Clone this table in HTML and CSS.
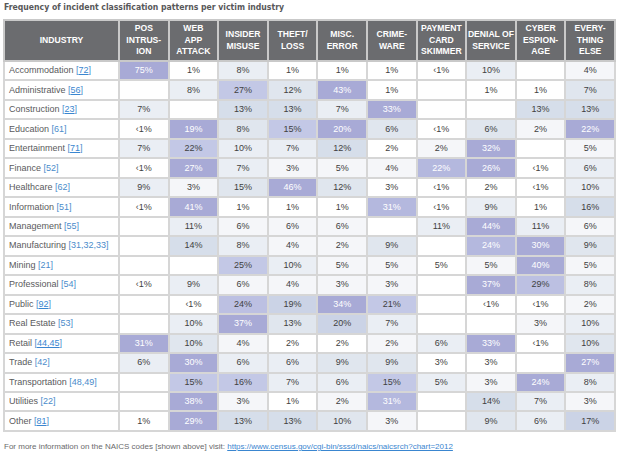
FILE: index.html
```html
<!DOCTYPE html>
<html lang="en">
<head>
<meta charset="utf-8">
<title>Frequency of incident classification patterns per victim industry</title>
<link rel="stylesheet" href="styles.css">
</head>
<body>
<div class="page">
  <h1 class="title">Frequency of incident classification patterns per victim industry</h1>
  <table class="heat">
    <colgroup>
      <col class="c-ind">
      <col class="c-val"><col class="c-val"><col class="c-val"><col class="c-val"><col class="c-val">
      <col class="c-val"><col class="c-val"><col class="c-val"><col class="c-val"><col class="c-val">
    </colgroup>
    <thead>
      <tr>
        <th>INDUSTRY</th>
        <th>POS<br>INTRUS-<br>ION</th>
        <th>WEB<br>APP<br>ATTACK</th>
        <th>INSIDER<br>MISUSE</th>
        <th>THEFT/<br>LOSS</th>
        <th>MISC.<br>ERROR</th>
        <th>CRIME-<br>WARE</th>
        <th>PAYMENT<br>CARD<br>SKIMMER</th>
        <th>DENIAL OF<br>SERVICE</th>
        <th>CYBER<br>ESPION-<br>AGE</th>
        <th>EVERY-<br>THING<br>ELSE</th>
      </tr>
    </thead>
    <tbody>
      <tr><td class="ind">Accommodation <span class="code">[<a href="#">72</a>]</span></td>
        <td class="h7">75%</td><td class="h0">1%</td><td class="h2">8%</td><td class="h0">1%</td><td class="h0">1%</td><td class="h0">1%</td><td class="h0">&lsaquo;1%</td><td class="h2">10%</td><td class="h0"></td><td class="h1">4%</td></tr>
      <tr><td class="ind">Administrative <span class="code">[<a href="#">56</a>]</span></td>
        <td class="h0"></td><td class="h2">8%</td><td class="h5">27%</td><td class="h3">12%</td><td class="h7">43%</td><td class="h0">1%</td><td class="h0"></td><td class="h0">1%</td><td class="h0">1%</td><td class="h3">7%</td></tr>
      <tr><td class="ind">Construction <span class="code">[<a href="#">23</a>]</span></td>
        <td class="h2">7%</td><td class="h0"></td><td class="h4">13%</td><td class="h4">13%</td><td class="h2">7%</td><td class="h7">33%</td><td class="h0"></td><td class="h0"></td><td class="h4">13%</td><td class="h4">13%</td></tr>
      <tr><td class="ind">Education <span class="code">[61]</span></td>
        <td class="h0">&lsaquo;1%</td><td class="h7">19%</td><td class="h3">8%</td><td class="h5">15%</td><td class="h7">20%</td><td class="h3">6%</td><td class="h0">&lsaquo;1%</td><td class="h3">6%</td><td class="h1">2%</td><td class="h7">22%</td></tr>
      <tr><td class="ind">Entertainment <span class="code">[<a href="#">71</a>]</span></td>
        <td class="h2">7%</td><td class="h5">22%</td><td class="h2">10%</td><td class="h2">7%</td><td class="h4">12%</td><td class="h0">2%</td><td class="h1">2%</td><td class="h7">32%</td><td class="h0"></td><td class="h1">5%</td></tr>
      <tr><td class="ind">Finance <span class="code">[52]</span></td>
        <td class="h0">&lsaquo;1%</td><td class="h7">27%</td><td class="h2">7%</td><td class="h1">3%</td><td class="h1">5%</td><td class="h1">4%</td><td class="h6">22%</td><td class="h7">26%</td><td class="h0">&lsaquo;1%</td><td class="h2">6%</td></tr>
      <tr><td class="ind">Healthcare <span class="code">[62]</span></td>
        <td class="h2">9%</td><td class="h1">3%</td><td class="h3">15%</td><td class="h7">46%</td><td class="h3">12%</td><td class="h0">3%</td><td class="h0">&lsaquo;1%</td><td class="h0">2%</td><td class="h0">&lsaquo;1%</td><td class="h2">10%</td></tr>
      <tr><td class="ind">Information <span class="code">[51]</span></td>
        <td class="h0">&lsaquo;1%</td><td class="h7">41%</td><td class="h0">1%</td><td class="h0">1%</td><td class="h0">1%</td><td class="h6">31%</td><td class="h0">&lsaquo;1%</td><td class="h2">9%</td><td class="h0">1%</td><td class="h4">16%</td></tr>
      <tr><td class="ind">Management <span class="code">[55]</span></td>
        <td class="h0"></td><td class="h2">11%</td><td class="h1">6%</td><td class="h1">6%</td><td class="h1">6%</td><td class="h0"></td><td class="h2">11%</td><td class="h7">44%</td><td class="h2">11%</td><td class="h1">6%</td></tr>
      <tr><td class="ind">Manufacturing <span class="code">[31,32,33]</span></td>
        <td class="h0"></td><td class="h4">14%</td><td class="h2">8%</td><td class="h1">4%</td><td class="h1">2%</td><td class="h3">9%</td><td class="h0"></td><td class="h6">24%</td><td class="h7">30%</td><td class="h3">9%</td></tr>
      <tr><td class="ind">Mining <span class="code">[21]</span></td>
        <td class="h0"></td><td class="h0"></td><td class="h5">25%</td><td class="h2">10%</td><td class="h1">5%</td><td class="h1">5%</td><td class="h0">5%</td><td class="h1">5%</td><td class="h7">40%</td><td class="h1">5%</td></tr>
      <tr><td class="ind">Professional <span class="code">[54]</span></td>
        <td class="h0">&lsaquo;1%</td><td class="h2">9%</td><td class="h1">6%</td><td class="h1">4%</td><td class="h1">3%</td><td class="h1">3%</td><td class="h0"></td><td class="h7">37%</td><td class="h6d">29%</td><td class="h2">8%</td></tr>
      <tr><td class="ind">Public <span class="code">[<a href="#">92</a>]</span></td>
        <td class="h0"></td><td class="h0">&lsaquo;1%</td><td class="h6d">24%</td><td class="h4b">19%</td><td class="h7">34%</td><td class="h5">21%</td><td class="h0"></td><td class="h0">&lsaquo;1%</td><td class="h0">&lsaquo;1%</td><td class="h1">2%</td></tr>
      <tr><td class="ind">Real Estate <span class="code">[53]</span></td>
        <td class="h0"></td><td class="h2">10%</td><td class="h7">37%</td><td class="h3">13%</td><td class="h4b">20%</td><td class="h2">7%</td><td class="h0"></td><td class="h0"></td><td class="h1">3%</td><td class="h2">10%</td></tr>
      <tr><td class="ind">Retail <span class="code">[<a href="#">44,45</a>]</span></td>
        <td class="h7">31%</td><td class="h3">10%</td><td class="h1">4%</td><td class="h0">2%</td><td class="h0">2%</td><td class="h1">2%</td><td class="h2">6%</td><td class="h7">33%</td><td class="h0">&lsaquo;1%</td><td class="h3">10%</td></tr>
      <tr><td class="ind">Trade <span class="code">[42]</span></td>
        <td class="h2">6%</td><td class="h7">30%</td><td class="h2">6%</td><td class="h2">6%</td><td class="h3">9%</td><td class="h3">9%</td><td class="h0">3%</td><td class="h0">3%</td><td class="h0"></td><td class="h7">27%</td></tr>
      <tr><td class="ind">Transportation <span class="code">[48,49]</span></td>
        <td class="h0"></td><td class="h5">15%</td><td class="h5">16%</td><td class="h2">7%</td><td class="h2">6%</td><td class="h5">15%</td><td class="h2">5%</td><td class="h1">3%</td><td class="h7">24%</td><td class="h2">8%</td></tr>
      <tr><td class="ind">Utilities <span class="code">[22]</span></td>
        <td class="h0"></td><td class="h7">38%</td><td class="h1">3%</td><td class="h0">1%</td><td class="h1">2%</td><td class="h6">31%</td><td class="h0"></td><td class="h4">14%</td><td class="h2">7%</td><td class="h1">3%</td></tr>
      <tr><td class="ind">Other <span class="code">[<a href="#">81</a>]</span></td>
        <td class="h0">1%</td><td class="h7">29%</td><td class="h4">13%</td><td class="h4">13%</td><td class="h3">10%</td><td class="h1">3%</td><td class="h0"></td><td class="h3">9%</td><td class="h2">6%</td><td class="h4b">17%</td></tr>
    </tbody>
  </table>
  <p class="note">For more information on the NAICS codes [shown above] visit: <a href="#">https://www.census.gov/cgi-bin/sssd/naics/naicsrch?chart=2012</a></p>
</div>
</body>
</html>
```
FILE: styles.css
```css
html, body {
  margin: 0;
  padding: 0;
  background: #ffffff;
}

.page {
  padding: 1px 0 0 3px;
  font-family: "Liberation Sans", Arial, sans-serif;
  color: #4a4a4c;
}

.title {
  margin: 0 0 6px 1px;
  font-family: "DejaVu Sans Condensed", "Liberation Sans", sans-serif;
  font-weight: 700;
  font-size: 8.6px;
  line-height: 12px;
  color: #58585a;
}

.heat {
  border-collapse: collapse;
  table-layout: fixed;
  width: 611px;
}

.c-ind { width: 115px; }
.c-val { width: 49.6px; }

.heat th,
.heat td {
  border: 2px solid #d6d6d6;
  padding: 0;
}

.heat thead tr { height: 41px; }

.heat th {
  background: #6b6c6f;
  color: #ffffff;
  font-family: "Liberation Sans", Arial, sans-serif;
  font-weight: 700;
  font-size: 8.6px;
  line-height: 11.5px;
  text-align: center;
  vertical-align: middle;
  white-space: nowrap;
  border-color: #c9c9c9;
}

.heat tbody tr { height: 19.47px; }

.heat td {
  font-size: 9px;
  line-height: 11px;
  text-align: center;
  vertical-align: middle;
  color: #3f3f41;
  white-space: nowrap;
}

.heat td.ind {
  text-align: left;
  padding-left: 4px;
  color: #5a5a5c;
}

.code { color: #4a8ccb; }
.code a { color: #3a86d0; text-decoration: underline; }

.h0 { background: #ffffff; }
.h1 { background: #f5f6f9; }
.h2 { background: #eaeef4; }
.h3 { background: #e0e6ee; }
.h4 { background: #d6deea; }
.h4b { background: #cbd3e6; }
.h5 { background: #c3c8e6; }
.h6 { background: #b4b8de; color: #ffffff !important; }
.h6d { background: #bcc0e2; }
.h7 { background: #a8aad6; color: #ffffff !important; }

.note {
  margin: 10px 0 0 1px;
  font-size: 8px;
  line-height: 10px;
  color: #6a6a6c;
}

.note a { color: #3a86d0; text-decoration: underline; }
```
